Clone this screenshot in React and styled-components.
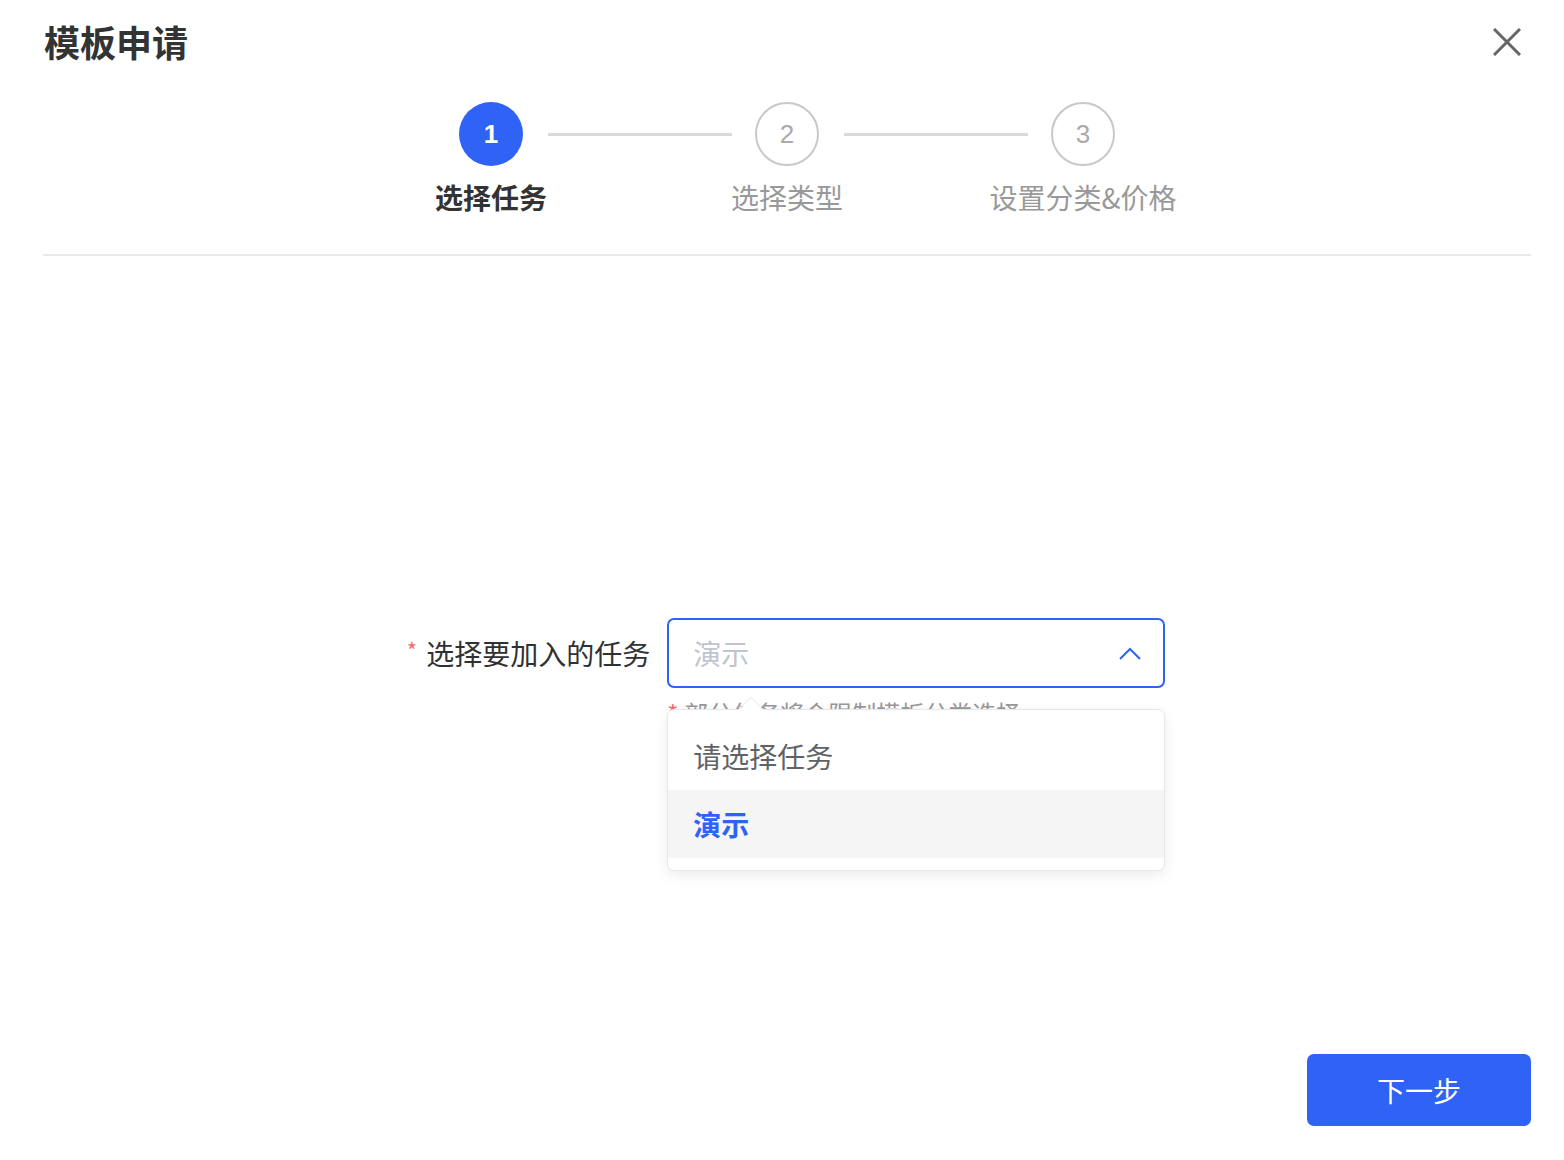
import styled, { createGlobalStyle } from "styled-components";

const BLUE = "#2e63f5";

const GlobalStyle = createGlobalStyle`
  html, body {
    margin: 0;
    padding: 0;
    background: #fff;
  }
  body {
    font-family: "Noto Sans CJK SC", "Noto Sans", sans-serif;
    color: #303133;
  }
`;

const Page = styled.div`
  display: flex;
  flex-direction: column;
  height: 1160px;
  box-sizing: border-box;
`;

const Header = styled.div`
  display: flex;
  align-items: center;
  justify-content: space-between;
  height: 84px;
  padding: 0 43px 0 44px;
`;

const Title = styled.h1`
  margin: 0 0 2px;
  font-size: 36px;
  line-height: 36px;
  font-weight: 700;
  color: #333;
`;

const CloseButton = styled.button`
  width: 28px;
  height: 28px;
  padding: 0;
  border: none;
  background: none;
  cursor: pointer;
  display: flex;
`;

const Steps = styled.div`
  display: grid;
  grid-template-columns: repeat(3, 296px);
  justify-content: center;
  margin: 18px 0 0 10px;
`;

const Step = styled.div`
  position: relative;
  display: flex;
  flex-direction: column;
  align-items: center;

  &:not(:last-child)::after {
    content: "";
    position: absolute;
    top: 31px;
    left: calc(50% + 57px);
    width: 184px;
    height: 3px;
    background: #d9d9d9;
  }
`;

const Circle = styled.div`
  width: 64px;
  height: 64px;
  box-sizing: border-box;
  border-radius: 50%;
  display: flex;
  align-items: center;
  justify-content: center;
  font-family: "Liberation Sans", Arial, sans-serif;
  font-size: 26px;
  font-weight: ${(p) => (p.active ? 700 : 400)};
  color: ${(p) => (p.active ? "#fff" : "#aaa")};
  background: ${(p) => (p.active ? BLUE : "#fff")};
  border: ${(p) => (p.active ? "none" : "2px solid #c8c8c8")};
`;

const StepLabel = styled.div`
  margin-top: 11px;
  font-size: 28px;
  line-height: 40px;
  white-space: nowrap;
  font-weight: ${(p) => (p.active ? 700 : 400)};
  color: ${(p) => (p.active ? "#333" : "#999")};
`;

const Divider = styled.div`
  height: 2px;
  margin: 37px 33px 0 43px;
  background: #e6e8ec;
`;

const Main = styled.div`
  flex: 1;
  padding-top: 362px;
  display: flex;
  justify-content: center;
  padding-left: 8px;
`;

const FormRow = styled.div`
  display: flex;
  align-items: flex-start;
  gap: 17px;
`;

const Label = styled.label`
  height: 70px;
  display: flex;
  align-items: center;
  font-size: 28px;
  color: #303133;
  white-space: nowrap;
`;

const Required = styled.span`
  color: #f56c6c;
  font-size: 22px;
  margin-right: 9px;
  position: relative;
  top: -4px;
`;

const Field = styled.div`
  position: relative;
  width: 498px;
`;

const SelectBox = styled.div`
  height: 70px;
  box-sizing: border-box;
  border: 2px solid ${BLUE};
  border-radius: 7px;
  display: flex;
  align-items: center;
  justify-content: space-between;
  padding: 0 22px 0 24px;
`;

const Placeholder = styled.span`
  font-size: 28px;
  color: #c0c4cc;
`;

const Hint = styled.div`
  margin-top: 9px;
  font-size: 24px;
  line-height: 32px;
  color: #999;
  white-space: nowrap;

  &::before {
    content: "*";
    color: #f56c6c;
    margin-right: 6px;
  }
`;

const Dropdown = styled.ul`
  position: absolute;
  top: 91px;
  left: 0;
  width: 100%;
  box-sizing: border-box;
  margin: 0;
  padding: 12px 0;
  list-style: none;
  background: #fff;
  border: 1px solid #e4e7ed;
  border-radius: 7px;
  box-shadow: 0 4px 14px rgba(0, 0, 0, 0.08);

  &::before,
  &::after {
    content: "";
    position: absolute;
    left: 71px;
    width: 0;
    height: 0;
    border: 12px solid transparent;
    border-top: none;
  }
  &::before {
    top: -13px;
    border-bottom: 12px solid #e4e7ed;
  }
  &::after {
    top: -12px;
    border-bottom: 12px solid #fff;
  }
`;

const Option = styled.li`
  height: 68px;
  display: flex;
  align-items: center;
  padding-left: 25px;
  font-size: 28px;
  color: ${(p) => (p.selected ? BLUE : "#606266")};
  font-weight: ${(p) => (p.selected ? 700 : 400)};
  background: ${(p) => (p.hovered ? "#f5f5f6" : "#fff")};
`;

const Footer = styled.div`
  display: flex;
  justify-content: flex-end;
  padding: 0 33px 34px 0;
`;

const NextButton = styled.button`
  width: 224px;
  height: 72px;
  border: none;
  border-radius: 7px;
  background: ${BLUE};
  color: #fff;
  font-family: "Noto Sans CJK SC", sans-serif;
  font-size: 28px;
  cursor: pointer;
`;

const steps = ["选择任务", "选择类型", "设置分类&价格"];

const App = () => (
  <Page>
    <GlobalStyle />
    <Header>
      <Title>模板申请</Title>
      <CloseButton type="button" aria-label="close">
        <svg width="28" height="28" viewBox="0 0 28 28">
          <path d="M1 1 L27 27 M27 1 L1 27" stroke="#666" strokeWidth="3" />
        </svg>
      </CloseButton>
    </Header>

    <Steps>
      {steps.map((label, idx) => (
        <Step key={label}>
          <Circle active={idx === 0}>{idx + 1}</Circle>
          <StepLabel active={idx === 0}>{label}</StepLabel>
        </Step>
      ))}
    </Steps>
    <Divider />

    <Main>
      <FormRow>
        <Label>
          <Required>*</Required>选择要加入的任务
        </Label>
        <Field>
          <SelectBox>
            <Placeholder>演示</Placeholder>
            <svg width="22" height="13" viewBox="0 0 22 13">
              <path d="M1 12 L11 2 L21 12" fill="none" stroke={BLUE} strokeWidth="2" />
            </svg>
          </SelectBox>
          <Hint>部分任务将会限制模板分类选择</Hint>
          <Dropdown>
            <Option>请选择任务</Option>
            <Option selected hovered>
              演示
            </Option>
          </Dropdown>
        </Field>
      </FormRow>
    </Main>

    <Footer>
      <NextButton type="button">下一步</NextButton>
    </Footer>
  </Page>
);

export default App;
